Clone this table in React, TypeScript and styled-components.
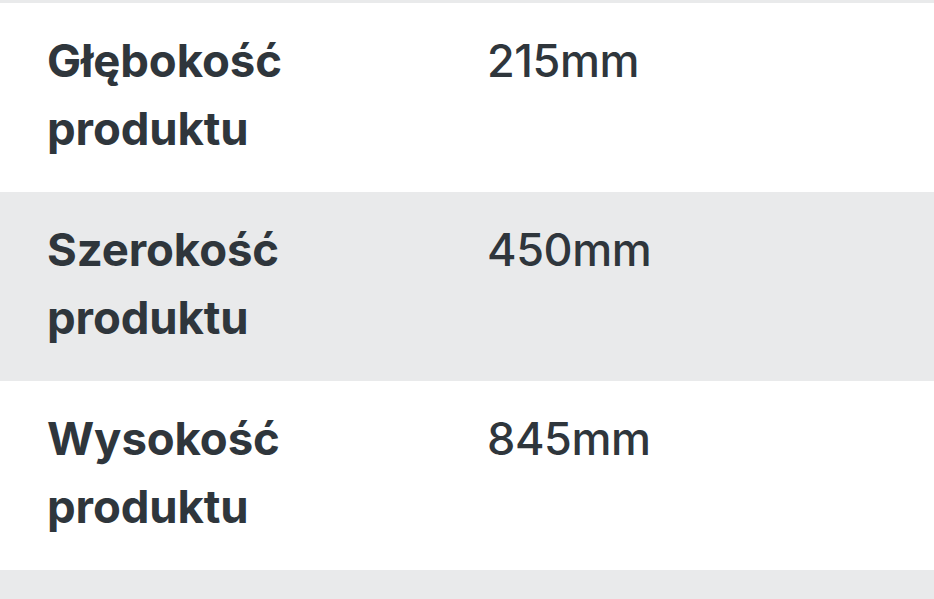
import React from "react";
import styled, { createGlobalStyle } from "styled-components";

const Global = createGlobalStyle`
  html, body { margin: 0; padding: 0; background: #ffffff; overflow: hidden; }
  body { font-family: Inter, "Noto Sans", sans-serif; color: #2f363c; }
`;

const Table = styled.div`
  display: flex;
  flex-direction: column;
  border-top: 3px solid #e9eaeb;
`;

const Row = styled.div<{ $shaded: boolean }>`
  display: grid;
  grid-template-columns: 440px 1fr;
  padding: 24px 0 0 47px;
  height: 189px;
  box-sizing: border-box;
  background: ${(p) => (p.$shaded ? "#e9eaeb" : "#ffffff")};
`;

const Label = styled.div`
  font-size: 45.5px;
  font-weight: 700;
  line-height: 68px;
  letter-spacing: -0.1px;
  max-width: 300px;
`;

const Value = styled.div`
  font-size: 45px;
  font-weight: 450;
  line-height: 68px;
  letter-spacing: -0.4px;
`;

const rows = [
  ["Głębokość produktu", "215mm"],
  ["Szerokość produktu", "450mm"],
  ["Wysokość produktu", "845mm"],
  ["", ""],
];

export default function App() {
  return (
    <>
      <Global />
      <Table>
        {rows.map(([l, v], i) => (
          <Row key={i} $shaded={i % 2 === 1}>
            <Label>{l}</Label>
            <Value>{v}</Value>
          </Row>
        ))}
      </Table>
    </>
  );
}
